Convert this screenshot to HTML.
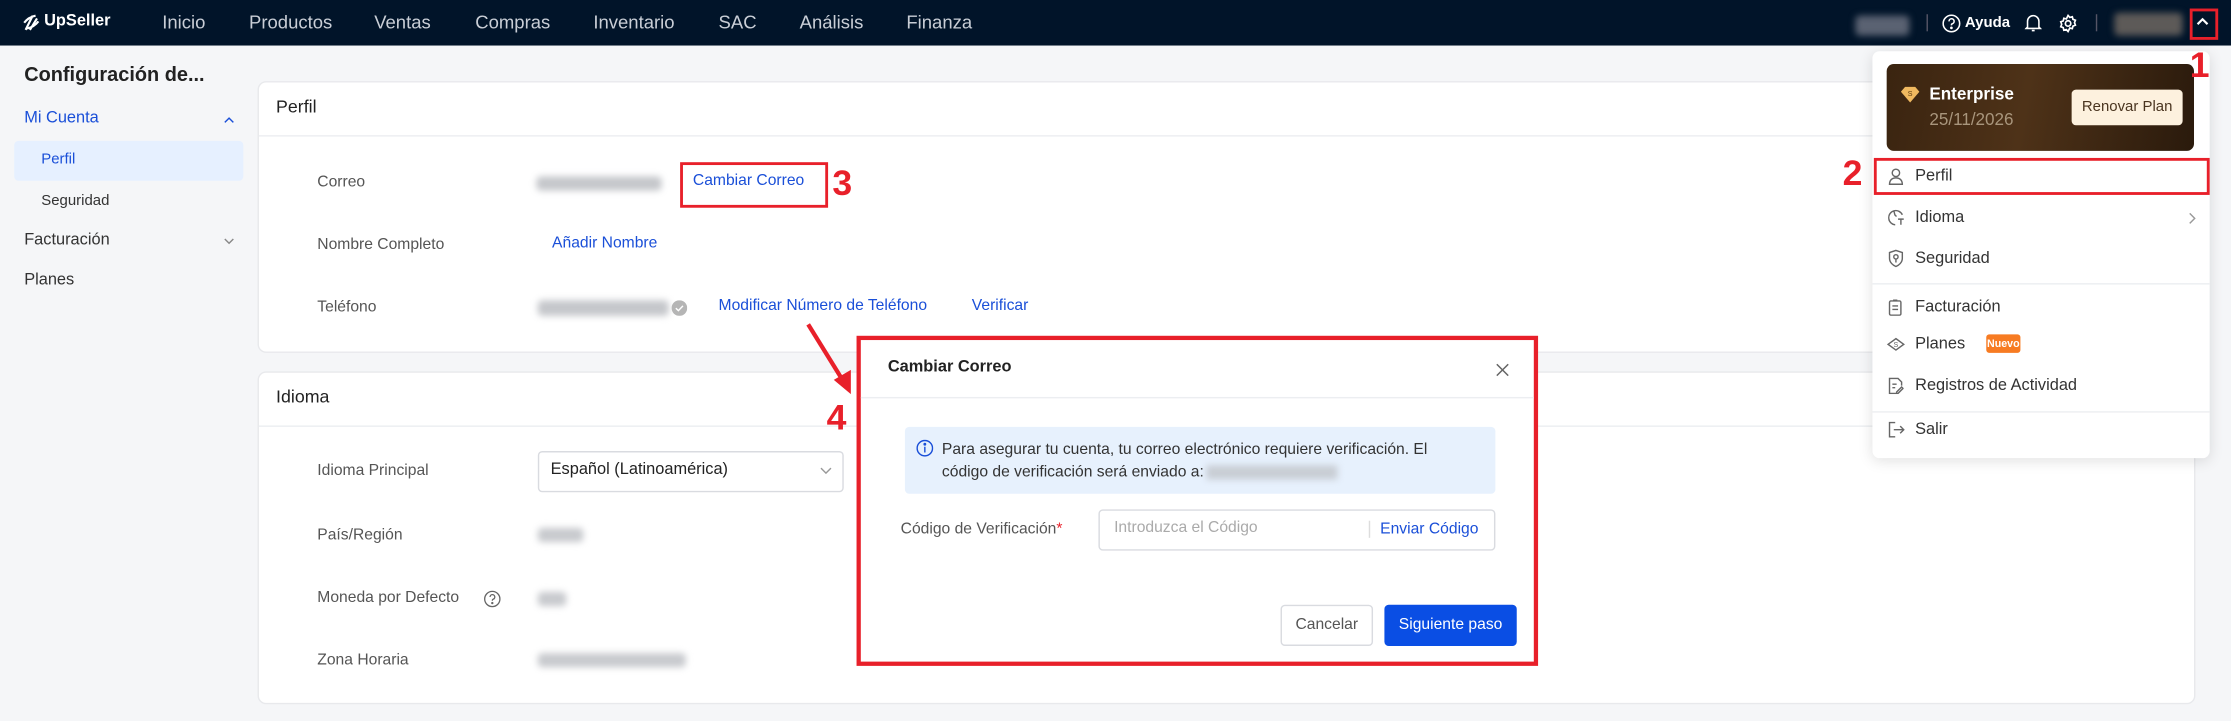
<!DOCTYPE html>
<html><head><meta charset="utf-8"><style>
*{box-sizing:border-box;margin:0;padding:0}
html,body{width:2231px;height:721px;overflow:hidden;background:#f5f6f8}
#w{position:absolute;left:0;top:0;width:1568px;height:507px;transform:scale(1.42283);transform-origin:0 0;font-family:"Liberation Sans",sans-serif;color:#333;font-size:11px}
.a{position:absolute;white-space:nowrap}
.nav{left:0;top:0;width:1568px;height:32px;background:#011429}
.ni{color:#c9ced6;font-size:13px;top:8px}
.blur{position:absolute;background:#b8bcc2;filter:blur(2.5px);border-radius:3px}
.card{position:absolute;background:#fff;border:1px solid #e8e9ec;border-radius:6px}
.lbl{color:#555;font-size:11px}
.blue{color:#1a4fd8}
.red{color:#e8202a;font-weight:bold;font-family:"Liberation Sans",sans-serif}
.rb{position:absolute;border:2px solid #e8202a}
.dd{font-size:11.5px;color:#333}
.ic{position:absolute}
</style></head><body><div id="w">
<div class="a nav"></div>
<svg class="ic" style="left:15px;top:9px" width="14" height="14" viewBox="0 0 14 14" fill="none" stroke="#fff" stroke-width="1.5"><path d="M3 12 L8 2 M6 12 L11 4 M2 7 Q5 3 10 2 M4 11 Q9 10 12 6"/></svg>
<div class="a" style="left:31px;top:9px;color:#fff;font-size:11.5px;font-weight:bold">UpSeller</div>
<div class="a ni" style="left:114px">Inicio</div>
<div class="a ni" style="left:175px">Productos</div>
<div class="a ni" style="left:263px">Ventas</div>
<div class="a ni" style="left:334px">Compras</div>
<div class="a ni" style="left:417px">Inventario</div>
<div class="a ni" style="left:505px">SAC</div>
<div class="a ni" style="left:562px">Análisis</div>
<div class="a ni" style="left:637px">Finanza</div>
<div class="blur" style="left:1304px;top:11px;width:38px;height:14px;background:#5a6272"></div>
<div class="a" style="left:1354px;top:10px;width:1px;height:12px;background:#556"></div>
<svg class="ic" style="left:1365px;top:10px" width="13" height="13" viewBox="0 0 13 13" fill="none" stroke="#fff" stroke-width="1.1"><circle cx="6.5" cy="6.5" r="5.8"/><path d="M4.8 5a1.8 1.8 0 1 1 2.3 1.7c-.5.2-.6.6-.6 1.1"/><circle cx="6.5" cy="9.6" r=".4" fill="#fff"/></svg>
<div class="a" style="left:1381px;top:10px;color:#fff;font-size:10.5px;font-weight:bold">Ayuda</div>
<svg class="ic" style="left:1423px;top:9px" width="12" height="14" viewBox="0 0 12 14" fill="none" stroke="#fff" stroke-width="1.1"><path d="M2 10V6a4 4 0 0 1 8 0v4l1 1H1z M5 12.5h2"/></svg>
<svg class="ic" style="left:1447px;top:10px" width="13" height="13" viewBox="0 0 24 24" fill="none" stroke="#fff" stroke-width="2.2"><circle cx="12" cy="12" r="3.5"/><path d="M12 1.5l2.2 2.6 3.3-.8.8 3.3 3.2 1.2-1.2 3.2 1.2 3.2-3.2 1.2-.8 3.3-3.3-.8L12 22.5l-2.2-2.6-3.3.8-.8-3.3-3.2-1.2 1.2-3.2-1.2-3.2 3.2-1.2.8-3.3 3.3.8z"/></svg>
<div class="a" style="left:1473px;top:10px;width:1px;height:12px;background:#556"></div>
<div class="blur" style="left:1486px;top:9px;width:48px;height:16px;background:#5d5a58"></div>
<svg class="ic" style="left:1543px;top:11px" width="10" height="8" viewBox="0 0 10 8" fill="none" stroke="#fff" stroke-width="1.5"><path d="M1.5 6L5 2.5 8.5 6"/></svg>
<div class="rb" style="left:1539px;top:6px;width:20px;height:22px"></div>

<div class="a" style="left:17px;top:44px;font-size:14px;font-weight:bold;color:#222">Configuración de...</div>
<div class="a blue" style="left:17px;top:77px;font-size:11.5px">Mi Cuenta</div>
<svg class="ic" style="left:157px;top:81px" width="8" height="6" viewBox="0 0 8 6" fill="none" stroke="#1a4fd8" stroke-width="1"><path d="M1 5L4 2 7 5"/></svg>
<div class="a" style="left:10px;top:99px;width:161px;height:28px;background:#e6f0ff;border-radius:3px"></div>
<div class="a blue" style="left:29px;top:106px;font-size:10.5px">Perfil</div>
<div class="a" style="left:29px;top:135px;font-size:10.5px;color:#333">Seguridad</div>
<div class="a" style="left:17px;top:163px;font-size:11.5px;color:#333">Facturación</div>
<svg class="ic" style="left:157px;top:167px" width="8" height="6" viewBox="0 0 8 6" fill="none" stroke="#888" stroke-width="1"><path d="M1 1L4 4 7 1"/></svg>
<div class="a" style="left:17px;top:191px;font-size:11.5px;color:#333">Planes</div>

<div class="card" style="left:181px;top:57px;width:1362px;height:191px"></div>
<div class="a" style="left:194px;top:68px;font-size:12.5px;color:#222">Perfil</div>
<div class="a" style="left:182px;top:95px;width:1360px;height:1px;background:#eceef1"></div>
<div class="a lbl" style="left:223px;top:122px">Correo</div>
<div class="blur" style="left:377px;top:124px;width:88px;height:10px;background:#c5c7cb"></div>
<div class="a blue" style="left:487px;top:121px">Cambiar Correo</div>
<div class="rb" style="left:478px;top:114px;width:104px;height:32px"></div>
<div class="a red" style="left:585px;top:115px;font-size:25px">3</div>
<div class="a lbl" style="left:223px;top:166px">Nombre Completo</div>
<div class="a blue" style="left:388px;top:165px">Añadir Nombre</div>
<div class="a lbl" style="left:223px;top:210px">Teléfono</div>
<div class="blur" style="left:378px;top:211px;width:92px;height:11px;background:#c5c7cb"></div>
<svg class="ic" style="left:472px;top:211px" width="11" height="11" viewBox="0 0 11 11"><circle cx="5.5" cy="5.5" r="5.5" fill="#b5b5b5"/><path d="M3 5.6l1.8 1.7L8 4" stroke="#fff" fill="none" stroke-width="1"/></svg>
<div class="a blue" style="left:505px;top:209px">Modificar Número de Teléfono</div>
<div class="a blue" style="left:683px;top:209px">Verificar</div>

<div class="card" style="left:181px;top:261px;width:1362px;height:234px"></div>
<div class="a" style="left:194px;top:272px;font-size:12.5px;color:#222">Idioma</div>
<div class="a" style="left:182px;top:299px;width:1360px;height:1px;background:#eceef1"></div>
<div class="a lbl" style="left:223px;top:325px">Idioma Principal</div>
<div class="a" style="left:378px;top:317px;width:215px;height:29px;border:1px solid #d9dbe0;border-radius:3px"></div>
<div class="a" style="left:387px;top:324px;color:#222;font-size:11.5px">Español (Latinoamérica)</div>
<svg class="ic" style="left:576px;top:328px" width="9" height="6" viewBox="0 0 9 6" fill="none" stroke="#999" stroke-width="1"><path d="M1 1L4.5 4.5 8 1"/></svg>
<div class="a lbl" style="left:223px;top:370px">País/Región</div>
<div class="blur" style="left:378px;top:371px;width:32px;height:10px;background:#c8cace"></div>
<div class="a lbl" style="left:223px;top:414px">Moneda por Defecto</div>
<svg class="ic" style="left:340px;top:415px" width="12" height="12" viewBox="0 0 13 13" fill="none" stroke="#666" stroke-width="1"><circle cx="6.5" cy="6.5" r="5.8"/><path d="M4.8 5a1.8 1.8 0 1 1 2.3 1.7c-.5.2-.6.6-.6 1.1"/><circle cx="6.5" cy="9.6" r=".4" fill="#666"/></svg>
<div class="blur" style="left:378px;top:416px;width:20px;height:10px;background:#c8cace"></div>
<div class="a lbl" style="left:223px;top:458px">Zona Horaria</div>
<div class="blur" style="left:378px;top:459px;width:104px;height:10px;background:#c8cace"></div>

<svg class="ic" style="left:560px;top:222px" width="45" height="60" viewBox="0 0 45 60"><path d="M8 6 L34 48" stroke="#e8202a" stroke-width="3"/><path d="M38 55 L26 45 L38 38 Z" fill="#e8202a"/></svg>
<div class="a red" style="left:581px;top:280px;font-size:25px">4</div>

<div class="a" style="left:602px;top:236px;width:479px;height:232px;border:3px solid #e8202a;background:#fff"></div>
<div class="a" style="left:624px;top:252px;font-size:11.5px;font-weight:bold;color:#222">Cambiar Correo</div>
<svg class="ic" style="left:1051px;top:255px" width="10" height="10" viewBox="0 0 10 10" stroke="#666" stroke-width="1.1"><path d="M1 1L9 9M9 1L1 9"/></svg>
<div class="a" style="left:605px;top:279px;width:473px;height:1px;background:#eceef1"></div>
<div class="a" style="left:636px;top:300px;width:415px;height:47px;background:#e7f1fd;border-radius:3px"></div>
<svg class="ic" style="left:644px;top:309px" width="12" height="12" viewBox="0 0 12 12" fill="none" stroke="#1a4fd8" stroke-width="1"><circle cx="6" cy="6" r="5.4"/><path d="M6 5v4"/><circle cx="6" cy="3.2" r=".5" fill="#1a4fd8"/></svg>
<div class="a" style="left:662px;top:308px;font-size:11px;color:#333;line-height:16px">Para asegurar tu cuenta, tu correo electrónico requiere verificación. El<br>código de verificación será enviado a:<span style="display:inline-block;width:92px;height:10px;background:#c8cdd4;filter:blur(2.5px);vertical-align:middle;margin-left:2px"></span></div>
<div class="a lbl" style="left:633px;top:366px">Código de Verificación<span style="color:#e8202a">*</span></div>
<div class="a" style="left:772px;top:358px;width:279px;height:29px;border:1px solid #d9dbe0;border-radius:3px"></div>
<div class="a" style="left:783px;top:365px;color:#aaa">Introduzca el Código</div>
<div class="a" style="left:962px;top:366px;width:1px;height:12px;background:#ddd"></div>
<div class="a blue" style="left:970px;top:366px">Enviar Código</div>
<div class="a" style="left:900px;top:425px;width:65px;height:29px;border:1px solid #d9dbe0;border-radius:3px;color:#555;text-align:center;line-height:27px">Cancelar</div>
<div class="a" style="left:973px;top:425px;width:93px;height:29px;background:#0a4ee4;border-radius:3px;color:#fff;text-align:center;line-height:29px">Siguiente paso</div>

<div class="a" style="left:1316px;top:36px;width:237px;height:286px;background:#fff;border-radius:5px;box-shadow:0 2px 10px rgba(0,0,0,.12)"></div>
<div class="a" style="left:1326px;top:45px;width:216px;height:61px;border-radius:5px;background:linear-gradient(100deg,#3a2410 0%,#4e3218 45%,#2a1a0c 100%)"></div>
<svg class="ic" style="left:1336px;top:61px" width="13" height="11" viewBox="0 0 13 11"><path d="M3 0h7l3 3.5-6.5 7.5L0 3.5z" fill="#f0b960"/><text x="6.5" y="6.5" font-size="5" text-anchor="middle" fill="#5a3a10" font-family="Liberation Sans">S</text></svg>
<div class="a" style="left:1356px;top:59px;font-size:12px;font-weight:bold;color:#fff">Enterprise</div>
<div class="a" style="left:1356px;top:77px;font-size:12px;color:#a8957c">25/11/2026</div>
<div class="a" style="left:1456px;top:63px;width:78px;height:25px;background:#fdf1de;border-radius:3px;color:#4a3520;font-size:10.5px;text-align:center;line-height:25px">Renovar Plan</div>
<div class="rb" style="left:1317px;top:111px;width:236px;height:26px"></div>
<svg class="ic" style="left:1327px;top:118px" width="11" height="12" viewBox="0 0 11 12" fill="none" stroke="#666" stroke-width="1"><circle cx="5.5" cy="3.5" r="2.6"/><path d="M1 11.5c0-3 2-4.5 4.5-4.5s4.5 1.5 4.5 4.5z"/></svg>
<div class="a dd" style="left:1346px;top:118px">Perfil</div>
<svg class="ic" style="left:1327px;top:147px" width="12" height="12" viewBox="0 0 12 12" fill="none" stroke="#666" stroke-width="1"><path d="M10 4A5 5 0 1 0 5 11M4 1.5c1 1.5 0 3 2 3.5M7 7h4M9 7v4"/></svg>
<div class="a dd" style="left:1346px;top:147px">Idioma</div>
<svg class="ic" style="left:1538px;top:149px" width="6" height="9" viewBox="0 0 6 9" fill="none" stroke="#999" stroke-width="1"><path d="M1 1l3.5 3.5L1 8"/></svg>
<svg class="ic" style="left:1327px;top:175px" width="11" height="13" viewBox="0 0 11 13" fill="none" stroke="#666" stroke-width="1"><path d="M5.5 1L10 2.5v4c0 3-2.5 5-4.5 5.8C3.5 11.5 1 9.5 1 6.5v-4z"/><circle cx="5.5" cy="5.5" r="1.5"/><path d="M5.5 7v2.5"/></svg>
<div class="a dd" style="left:1346px;top:176px">Seguridad</div>
<div class="a" style="left:1316px;top:199px;width:237px;height:1px;background:#eceef1"></div>
<svg class="ic" style="left:1327px;top:210px" width="10" height="12" viewBox="0 0 10 12" fill="none" stroke="#666" stroke-width="1"><rect x="1" y="1.5" width="8" height="10" rx="1"/><path d="M3.5 1h3M3 5h4M3 7.5h4"/></svg>
<div class="a dd" style="left:1346px;top:210px">Facturación</div>
<svg class="ic" style="left:1326px;top:237px" width="13" height="10" viewBox="0 0 13 10" fill="none" stroke="#666" stroke-width="1"><path d="M6.5 1L12 5 6.5 9 1 5z"/><text x="6.5" y="7" font-size="5" text-anchor="middle" fill="#666" stroke="none" font-family="Liberation Sans">S</text></svg>
<div class="a dd" style="left:1346px;top:236px">Planes</div>
<div class="a" style="left:1396px;top:235px;width:24px;height:13px;background:#f77b22;border-radius:2px;color:#fff;font-size:7.5px;font-weight:bold;text-align:center;line-height:13px">Nuevo</div>
<svg class="ic" style="left:1327px;top:265px" width="11" height="12" viewBox="0 0 11 12" fill="none" stroke="#666" stroke-width="1"><path d="M7 11.5H1V1h6l2.5 2.5V6M3 5h3M3 7.5h2M6 10.5l3.5-3.5 1 1-3.5 3.5H6z"/></svg>
<div class="a dd" style="left:1346px;top:265px">Registros de Actividad</div>
<div class="a" style="left:1316px;top:289px;width:237px;height:1px;background:#eceef1"></div>
<svg class="ic" style="left:1327px;top:296px" width="12" height="12" viewBox="0 0 12 12" fill="none" stroke="#666" stroke-width="1"><path d="M5 1H1v10h4M4 6h7M8.5 3.5L11 6 8.5 8.5"/></svg>
<div class="a dd" style="left:1346px;top:296px">Salir</div>

<div class="a red" style="left:1539px;top:32px;font-size:25px">1</div>
<div class="a red" style="left:1295px;top:108px;font-size:25px">2</div>
</div></body></html>
